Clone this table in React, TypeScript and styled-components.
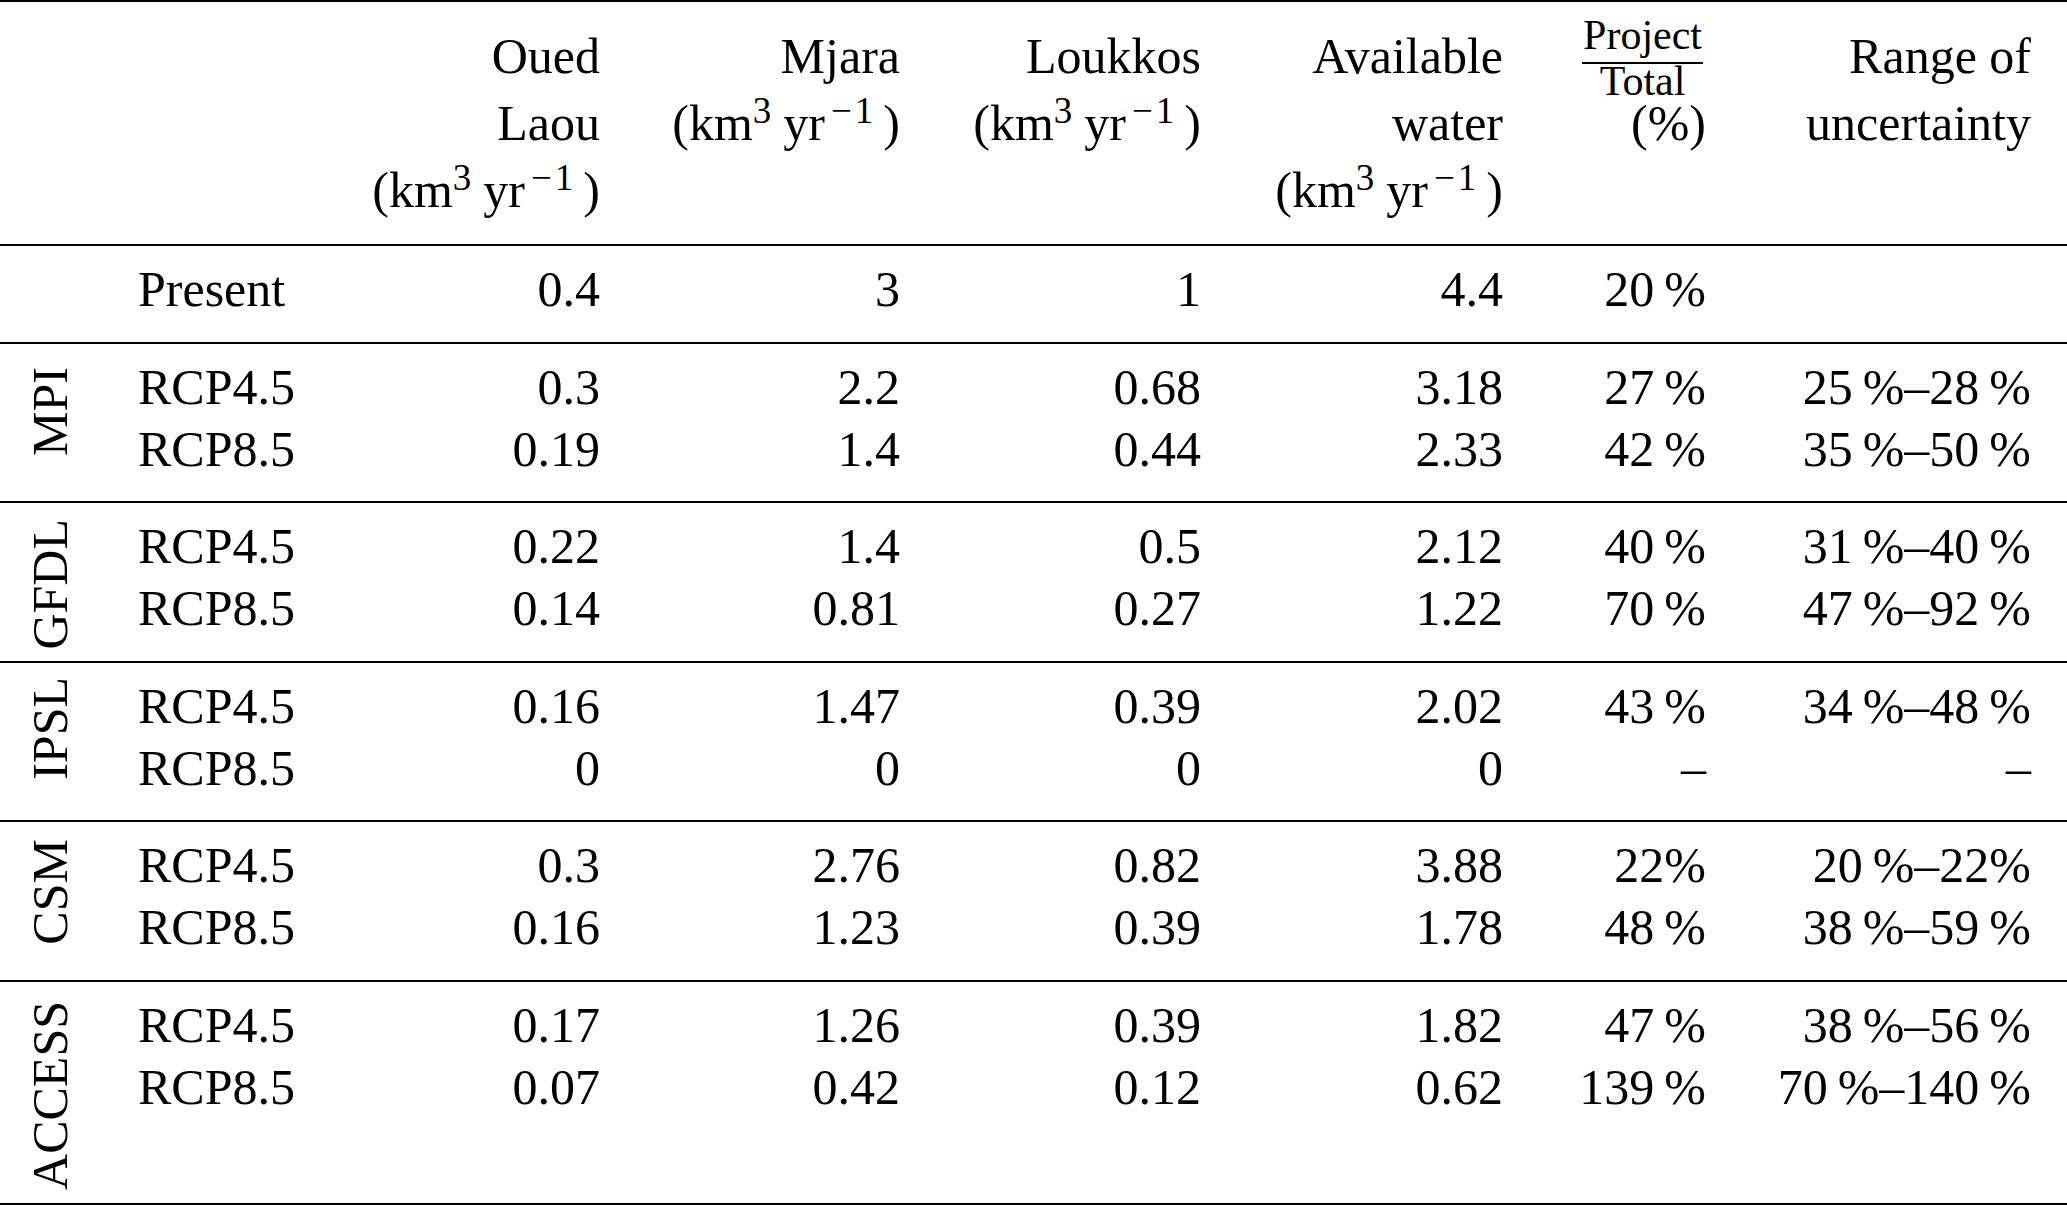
import React from 'react'
import styled, { createGlobalStyle } from 'styled-components'

const GlobalStyle = createGlobalStyle`
  html, body {
    margin: 0;
    padding: 0;
    background: #fff;
  }
  body {
    font-family: "Liberation Serif", "Times New Roman", serif;
    color: #000;
  }
`

// scenario, Oued Laou, Mjara, Loukkos, Available, Project/Total, Range
const COLUMNS = '230px 270px 300px 301px 302px 203px 325px'

const Table = styled.div`
  width: 2067px;
  box-sizing: border-box;
  border-top: 2px solid #000;
  border-bottom: 2px solid #000;
  font-size: 50px;
`

const Header = styled.div`
  display: flex;
  padding: 21px 36px 20px 0;
`

const LabelSpacer = styled.div`
  flex: 0 0 100px;
`

const HeaderGrid = styled.div`
  display: grid;
  grid-template-columns: ${COLUMNS};
  line-height: 67px;
`

const HeaderCell = styled.div`
  text-align: right;
  white-space: nowrap;
`

const Sup = styled.sup<{ $after?: number; $spread?: number }>`
  font-size: 37px;
  line-height: 0;
  vertical-align: 17px;
  margin-right: ${(p) => p.$after ?? 0}px;
  letter-spacing: ${(p) => p.$spread ?? 0}px;
`

const Gap = styled.span<{ $w: number }>`
  display: inline-block;
  width: ${(p) => p.$w}px;
`

const Fraction = styled.span`
  display: inline-flex;
  flex-direction: column;
  align-items: center;
  vertical-align: top;
  margin: -5px 3px -8px 0;
  font-size: 42px;
  line-height: 34px;
`

const Numerator = styled.span`
  padding: 0 1px 10px;
  border-bottom: 2px solid #000;
`

const Section = styled.div`
  display: flex;
  align-items: flex-start;
  border-top: 2px solid #000;
  padding: 0 36px 21.5px 0;
`

const GroupLabel = styled.div<{ $top: number; $bottom: number }>`
  flex: 0 0 100px;
  display: flex;
  align-items: flex-start;
  box-sizing: border-box;
  padding: ${(p) => p.$top}px 0 ${(p) => p.$bottom}px 25px;
  margin-bottom: -21.5px;
`

const Rotated = styled.span`
  writing-mode: vertical-rl;
  transform: rotate(180deg);
  line-height: 50px;
  white-space: nowrap;
`

const Rows = styled.div`
  display: grid;
  grid-template-columns: ${COLUMNS};
  padding-top: 12px;
  line-height: 62px;
`

const Scenario = styled.div`
  padding-left: 38px;
  white-space: nowrap;
`

const Num = styled.div`
  text-align: right;
  white-space: nowrap;
`

const Units = () => (
  <>
    (km<Sup>3</Sup>
    <Gap $w={12} />
    yr<Gap $w={6} />
    <Sup $spread={3} $after={7}>−1</Sup>)
  </>
)

type Row = string[]

interface Group {
  name: string
  top: number
  bottom: number
  rows: Row[]
}

const thin = (s: string) => s.replace(/ /g, '\u2009')

const groups: Group[] = [
  {
    name: 'MPI',
    top: 23,
    bottom: 10,
    rows: [
      ['RCP4.5', '0.3', '2.2', '0.68', '3.18', '27 %', '25 %–28 %'],
      ['RCP8.5', '0.19', '1.4', '0.44', '2.33', '42 %', '35 %–50 %'],
    ],
  },
  {
    name: 'GFDL',
    top: 16,
    bottom: 10,
    rows: [
      ['RCP4.5', '0.22', '1.4', '0.5', '2.12', '40 %', '31 %–40 %'],
      ['RCP8.5', '0.14', '0.81', '0.27', '1.22', '70 %', '47 %–92 %'],
    ],
  },
  {
    name: 'IPSL',
    top: 14,
    bottom: 10,
    rows: [
      ['RCP4.5', '0.16', '1.47', '0.39', '2.02', '43 %', '34 %–48 %'],
      ['RCP8.5', '0', '0', '0', '0', '–', '–'],
    ],
  },
  {
    name: 'CSM',
    top: 17,
    bottom: 10,
    rows: [
      ['RCP4.5', '0.3', '2.76', '0.82', '3.88', '22%', '20 %–22%'],
      ['RCP8.5', '0.16', '1.23', '0.39', '1.78', '48 %', '38 %–59 %'],
    ],
  },
  {
    name: 'ACCESS',
    top: 19,
    bottom: 13.5,
    rows: [
      ['RCP4.5', '0.17', '1.26', '0.39', '1.82', '47 %', '38 %–56 %'],
      ['RCP8.5', '0.07', '0.42', '0.12', '0.62', '139 %', '70 %–140 %'],
    ],
  },
]

const DataRow: React.FC<{ row: Row }> = ({ row }) => (
  <>
    <Scenario>{row[0]}</Scenario>
    {row.slice(1).map((v, i) => (
      <Num key={i}>{thin(v)}</Num>
    ))}
  </>
)

const App: React.FC = () => {
  return (
    <>
      <GlobalStyle />
      <Table>
        <Header>
          <LabelSpacer />
          <HeaderGrid>
            <HeaderCell />
            <HeaderCell>
              Oued
              <br />
              Laou
              <br />
              <Units />
            </HeaderCell>
            <HeaderCell>
              Mjara
              <br />
              <Units />
            </HeaderCell>
            <HeaderCell>
              Loukkos
              <br />
              <Units />
            </HeaderCell>
            <HeaderCell>
              Available
              <br />
              water
              <br />
              <Units />
            </HeaderCell>
            <HeaderCell>
              <Fraction>
                <Numerator>Project</Numerator>
                <span>Total</span>
              </Fraction>
              <br />
              (%)
            </HeaderCell>
            <HeaderCell>
              Range of
              <br />
              uncertainty
            </HeaderCell>
          </HeaderGrid>
        </Header>

        <Section>
          <LabelSpacer />
          <Rows>
            <DataRow row={['Present', '0.4', '3', '1', '4.4', '20 %', '']} />
          </Rows>
        </Section>

        {groups.map((g) => (
          <Section key={g.name}>
            <GroupLabel $top={g.top} $bottom={g.bottom}>
              <Rotated>{g.name}</Rotated>
            </GroupLabel>
            <Rows>
              {g.rows.map((r) => (
                <DataRow key={r[0]} row={r} />
              ))}
            </Rows>
          </Section>
        ))}
      </Table>
    </>
  )
}

export default App
